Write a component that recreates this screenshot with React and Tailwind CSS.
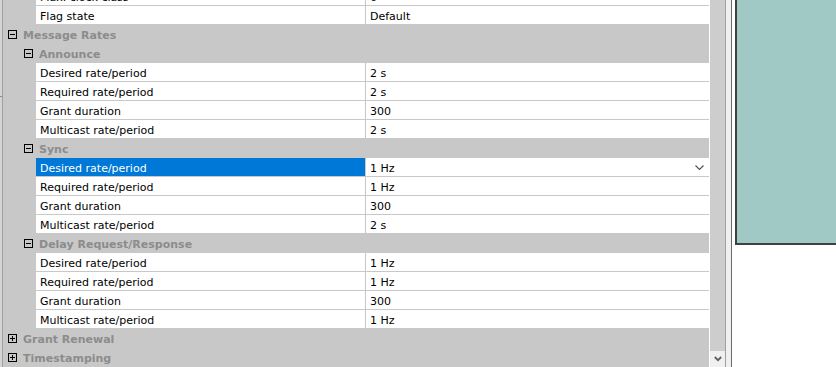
import React from "react";

const F = { fontFamily: '"DejaVu Sans", Verdana, sans-serif' };

function Box({ plus }) {
  return (
    <div className="relative w-[9px] h-[9px] border border-black shrink-0">
      <div className="absolute left-[1px] top-[3px] w-[5px] h-px bg-black" />
      {plus && <div className="absolute left-[3px] top-[1px] w-px h-[5px] bg-black" />}
    </div>
  );
}

function Row({ name, value, selected, dropdown, className = "" }) {
  return (
    <div className={`flex h-[19px] border-t border-[#c8c8c8] ${className}`}>
      <div className="w-[33px] bg-[#c8c8c8] shrink-0" />
      <div
        className={`w-[329px] shrink-0 pl-[4px] pt-[2px] flex items-center whitespace-nowrap ${
          selected ? "bg-[#0078d7] text-white" : "bg-white text-black"
        }`}
      >
        {name}
      </div>
      <div className="w-px bg-[#c8c8c8] shrink-0" />
      <div className="flex-1 bg-white pl-[4px] pr-[5px] flex items-center justify-between text-black whitespace-nowrap">
        <span className="pt-[2px]">{value}</span>
        {dropdown && (
          <svg width="9" height="6" viewBox="0 0 9 6" className="mt-[2px]">
            <path d="M0.5 0.5 L4.5 4.5 L8.5 0.5" fill="none" stroke="#505050" strokeWidth="1.1" />
          </svg>
        )}
      </div>
    </div>
  );
}

function Header({ title, level, plus }) {
  return (
    <div className="flex h-[19px] border-t border-[#c8c8c8] bg-[#c8c8c8] items-center">
      <div className={level === 0 ? "pl-[5px] pt-[1px]" : "pl-[21px] pt-[1px]"}>
        <Box plus={plus} />
      </div>
      <span className="pl-[6px] pt-[2px] font-bold text-[#8c8c8c] whitespace-nowrap">{title}</span>
    </div>
  );
}

export default function App() {
  return (
    <div className="w-[836px] h-[367px] overflow-hidden flex bg-white text-[11px] leading-none" style={F}>
      <div className="w-[2px] bg-[#d4d4d4] shrink-0 flex flex-col">
        <div className="h-[96px]" />
        <div className="h-px bg-[#888]" />
      </div>
      <div className="w-px bg-[#a0a0a0] shrink-0" />
      <div className="w-[706px] shrink-0 bg-[#c8c8c8] overflow-hidden">
        <Row name="Max. clock class" value="6" className="mt-[-14px]" />
        <Row name="Flag state" value="Default" />
        <Header title="Message Rates" level={0} />
        <Header title="Announce" level={1} />
        <Row name="Desired rate/period" value="2 s" />
        <Row name="Required rate/period" value="2 s" />
        <Row name="Grant duration" value="300" />
        <Row name="Multicast rate/period" value="2 s" />
        <Header title="Sync" level={1} />
        <Row name="Desired rate/period" value="1 Hz" selected dropdown />
        <Row name="Required rate/period" value="1 Hz" />
        <Row name="Grant duration" value="300" />
        <Row name="Multicast rate/period" value="2 s" />
        <Header title="Delay Request/Response" level={1} />
        <Row name="Desired rate/period" value="1 Hz" />
        <Row name="Required rate/period" value="1 Hz" />
        <Row name="Grant duration" value="300" />
        <Row name="Multicast rate/period" value="1 Hz" />
        <Header title="Grant Renewal" level={0} plus />
        <Header title="Timestamping" level={0} plus />
      </div>
      <div className="w-px bg-white shrink-0" />
      <div className="w-[15px] shrink-0 flex flex-col">
        <div className="flex-1 bg-[#cdcdcd]" />
        <div className="h-[16px] bg-[#f0f0f0] flex items-center justify-center">
          <svg width="8" height="6" viewBox="0 0 8 6">
            <path d="M0.8 1 L4 4.2 L7.2 1" fill="none" stroke="#606060" strokeWidth="1.8" />
          </svg>
        </div>
      </div>
      <div className="w-px bg-[#a0a0a0] shrink-0" />
      <div className="w-[5px] bg-[#f0f0f0] shrink-0" />
      <div className="w-px bg-[#6a6a6a] shrink-0" />
      <div className="flex-1 bg-white pl-[3px]">
        <div className="h-[245px] bg-[#a0c8c4] border-l-2 border-b-2 border-[#404040]" />
      </div>
    </div>
  );
}
